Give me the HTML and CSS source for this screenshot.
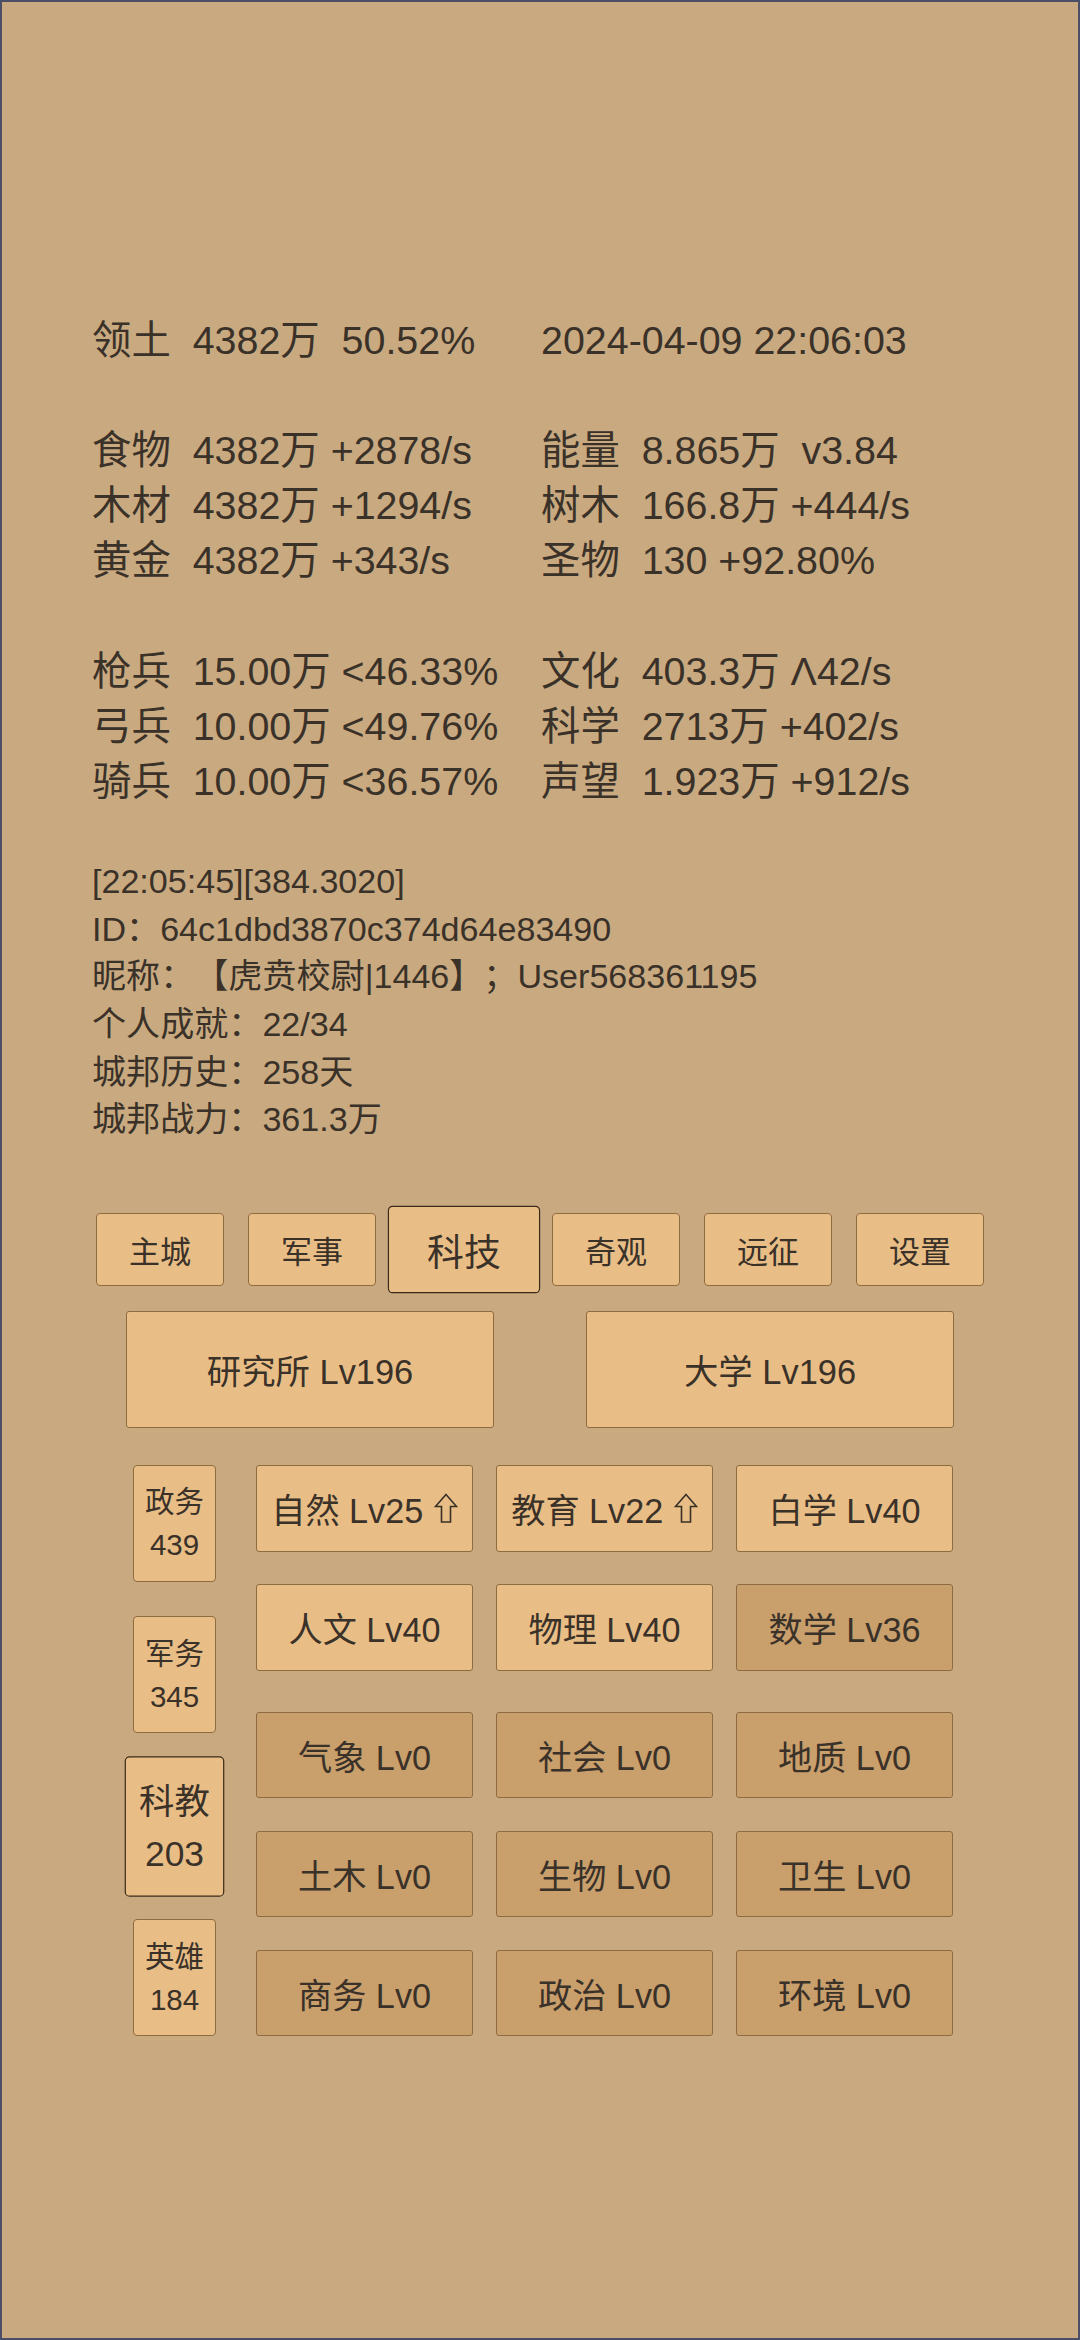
FILE: index.html
```html
<!DOCTYPE html>
<html lang="zh">
<head>
<meta charset="utf-8">
<title>城邦</title>
<link rel="stylesheet" href="styles.css">
</head>
<body>
<div class="screen">
  <div class="stats">
    <div class="group">
      <div class="cell">领土  4382万  50.52%</div>
      <div class="cell">2024-04-09 22:06:03</div>
    </div>
    <div class="group">
      <div class="cell">食物  4382万 +2878/s</div>
      <div class="cell">能量  8.865万  v3.84</div>
      <div class="cell">木材  4382万 +1294/s</div>
      <div class="cell">树木  166.8万 +444/s</div>
      <div class="cell">黄金  4382万 +343/s</div>
      <div class="cell">圣物  130 +92.80%</div>
    </div>
    <div class="group">
      <div class="cell">枪兵  15.00万 &lt;46.33%</div>
      <div class="cell">文化  403.3万 Λ42/s</div>
      <div class="cell">弓兵  10.00万 &lt;49.76%</div>
      <div class="cell">科学  2713万 +402/s</div>
      <div class="cell">骑兵  10.00万 &lt;36.57%</div>
      <div class="cell">声望  1.923万 +912/s</div>
    </div>
  </div>

  <div class="info">
    <div class="line">[22:05:45][384.3020]</div>
    <div class="line">ID：64c1dbd3870c374d64e83490</div>
    <div class="line">昵称：【虎贲校尉|1446】；User568361195</div>
    <div class="line">个人成就：22/34</div>
    <div class="line">城邦历史：258天</div>
    <div class="line">城邦战力：361.3万</div>
  </div>

  <div class="tabs">
    <div class="tab">主城</div>
    <div class="tab">军事</div>
    <div class="tab active">科技</div>
    <div class="tab">奇观</div>
    <div class="tab">远征</div>
    <div class="tab">设置</div>
  </div>

  <div class="buildings">
    <div class="building">研究所 Lv196</div>
    <div class="building">大学 Lv196</div>
  </div>

  <div class="main">
    <div class="side">
      <div class="sidebtn"><span>政务</span><span>439</span></div>
      <div class="sidebtn"><span>军务</span><span>345</span></div>
      <div class="sidebtn active"><span>科教</span><span>203</span></div>
      <div class="sidebtn"><span>英雄</span><span>184</span></div>
    </div>
    <div class="techs">
      <div class="grid">
        <div class="tech"><span>自然 Lv25 </span><svg class="up" viewBox="0 0 24 30"><path d="M12 1.5 L22.5 13.5 L16.5 13.5 L16.5 29 L7.5 29 L7.5 13.5 L1.5 13.5 Z"/></svg></div>
        <div class="tech"><span>教育 Lv22 </span><svg class="up" viewBox="0 0 24 30"><path d="M12 1.5 L22.5 13.5 L16.5 13.5 L16.5 29 L7.5 29 L7.5 13.5 L1.5 13.5 Z"/></svg></div>
        <div class="tech">白学 Lv40</div>
        <div class="tech">人文 Lv40</div>
        <div class="tech">物理 Lv40</div>
        <div class="tech locked">数学 Lv36</div>
      </div>
      <div class="grid second">
        <div class="tech locked">气象 Lv0</div>
        <div class="tech locked">社会 Lv0</div>
        <div class="tech locked">地质 Lv0</div>
        <div class="tech locked">土木 Lv0</div>
        <div class="tech locked">生物 Lv0</div>
        <div class="tech locked">卫生 Lv0</div>
        <div class="tech locked">商务 Lv0</div>
        <div class="tech locked">政治 Lv0</div>
        <div class="tech locked">环境 Lv0</div>
      </div>
    </div>
  </div>
</div>
</body>
</html>
```

FILE: styles.css
```css
html, body {
  margin: 0;
  padding: 0;
}

body {
  background: #c9aa80;
  font-family: "Liberation Sans", "Noto Sans CJK SC", sans-serif;
  color: #3a3129;
  text-spacing-trim: space-all;
}

.screen {
  width: 1080px;
  height: 2340px;
  box-sizing: border-box;
  border: 2px solid #4b4e66;
  background: #c9aa80;
  padding-top: 311px;
}

.stats {
  padding-left: 90px;
  font-size: 39.4px;
}

.group {
  display: grid;
  grid-template-columns: 449px auto;
  grid-auto-rows: 55.1px;
}

.group + .group {
  margin-top: 55.1px;
}

.cell {
  white-space: pre;
  line-height: 55.1px;
}

.info {
  margin-top: 49px;
  padding-left: 90px;
  font-size: 34.1px;
}

.line {
  height: 47.7px;
  line-height: 47.7px;
  white-space: pre;
}

.tabs {
  margin-top: 69px;
  display: flex;
  justify-content: center;
}

.tab {
  width: 128px;
  height: 73px;
  margin: 0 12px;
  box-sizing: border-box;
  border: 1.5px solid #8e6b40;
  border-radius: 4px;
  background: #e9be86;
  display: flex;
  align-items: center;
  justify-content: center;
  font-size: 31px;
}

.tab.active {
  transform: scale(1.19, 1.2);
  border-color: #3b2a18;
}

.buildings {
  margin-top: 25px;
  display: flex;
  justify-content: center;
  gap: 92px;
}

.building {
  width: 368px;
  height: 117px;
  box-sizing: border-box;
  border: 1.5px solid #8e6b40;
  border-radius: 3px;
  background: #e9be86;
  display: flex;
  align-items: center;
  justify-content: center;
  font-size: 34.4px;
}

.main {
  margin-top: 37px;
  padding-left: 131px;
  display: flex;
  gap: 40px;
}

.side {
  width: 83px;
  display: flex;
  flex-direction: column;
  justify-content: space-between;
}

.sidebtn {
  width: 83px;
  height: 117px;
  box-sizing: border-box;
  border: 1.5px solid #8e6b40;
  border-radius: 4px;
  background: #e9be86;
  display: flex;
  flex-direction: column;
  align-items: center;
  justify-content: center;
  font-size: 29.5px;
  line-height: 43px;
}

.sidebtn.active {
  transform: scale(1.2);
  border-color: #3b2a18;
}

.grid {
  display: grid;
  grid-template-columns: repeat(3, 217px);
  grid-auto-rows: 86.6px;
  column-gap: 23px;
  row-gap: 32.5px;
}

.grid.second {
  margin-top: 41px;
}

.tech {
  box-sizing: border-box;
  border: 1.5px solid #8e6b40;
  border-radius: 3px;
  background: #e9be86;
  display: flex;
  align-items: center;
  justify-content: center;
  font-size: 34.2px;
  white-space: pre;
}

.tech.locked {
  background: #c99f6c;
}

.up {
  width: 24px;
  height: 30px;
  margin-left: 1px;
  fill: none;
  stroke: #3a3129;
  stroke-width: 1.6;
  stroke-linejoin: miter;
}
```
